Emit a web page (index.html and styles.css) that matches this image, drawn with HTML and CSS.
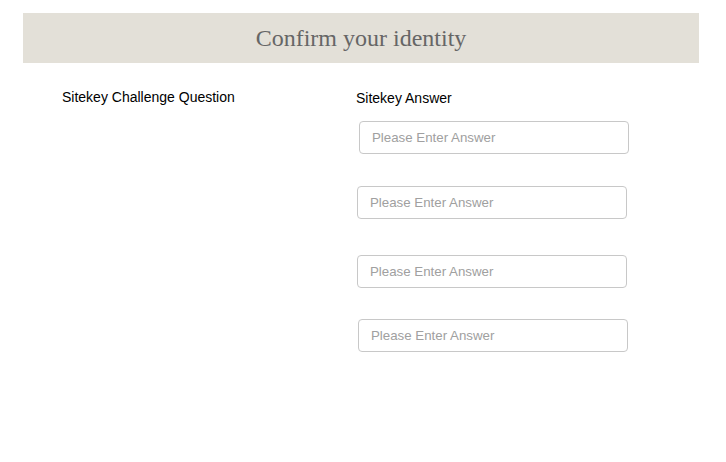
FILE: index.html
```html
<!DOCTYPE html>
<html>
<head>
<meta charset="utf-8">
<link rel="stylesheet" href="styles.css">
</head>
<body>
<div class="page">
  <header class="banner"><h1 class="title">Confirm your identity</h1></header>
  <div class="form">
    <div class="col-q">
      <div class="label q-label">Sitekey Challenge Question</div>
    </div>
    <div class="col-a">
      <div class="label a-label">Sitekey Answer</div>
      <input class="answer a1" type="text" placeholder="Please Enter Answer">
      <input class="answer a2" type="text" placeholder="Please Enter Answer">
      <input class="answer a3" type="text" placeholder="Please Enter Answer">
      <input class="answer a4" type="text" placeholder="Please Enter Answer">
    </div>
  </div>
</div>
</body>
</html>
```

FILE: styles.css
```css
html, body { margin: 0; padding: 0; background: #fff; }
body { font-family: "Liberation Sans", Arial, sans-serif; }
.page { padding: 13px 27px 0 23px; }
.banner {
  background: #e3e0d8;
  height: 50px;
  display: flex;
  align-items: center;
  justify-content: center;
}
.title {
  margin: 0;
  font-family: "Liberation Serif", "Times New Roman", serif;
  font-weight: normal;
  font-size: 24px;
  color: #666;
  line-height: 1;
  padding-bottom: 1px;
}
.form { display: flex; }
.col-q { width: 333px; padding-left: 39px; box-sizing: border-box; flex: none; }
.col-a { display: flex; flex-direction: column; align-items: flex-start; }
.label { font-size: 14px; color: #000; line-height: 16px; }
.q-label { margin-top: 26px; }
.a-label { margin-top: 27px; }
.answer {
  box-sizing: border-box;
  width: 270px;
  height: 33px;
  border: 1px solid #c8c8c8;
  border-radius: 4px;
  padding: 0 12px;
  font-family: "Liberation Sans", Arial, sans-serif;
  font-size: 13.3px;
  color: #333;
  background: #fff;
  outline: none;
}
.answer::placeholder { color: #a0a0a0; }
.a1 { margin-top: 15px; margin-left: 3px; }
.a2 { margin-top: 32px; margin-left: 1px; }
.a3 { margin-top: 36px; margin-left: 1px; }
.a4 { margin-top: 31px; margin-left: 2px; }
```
